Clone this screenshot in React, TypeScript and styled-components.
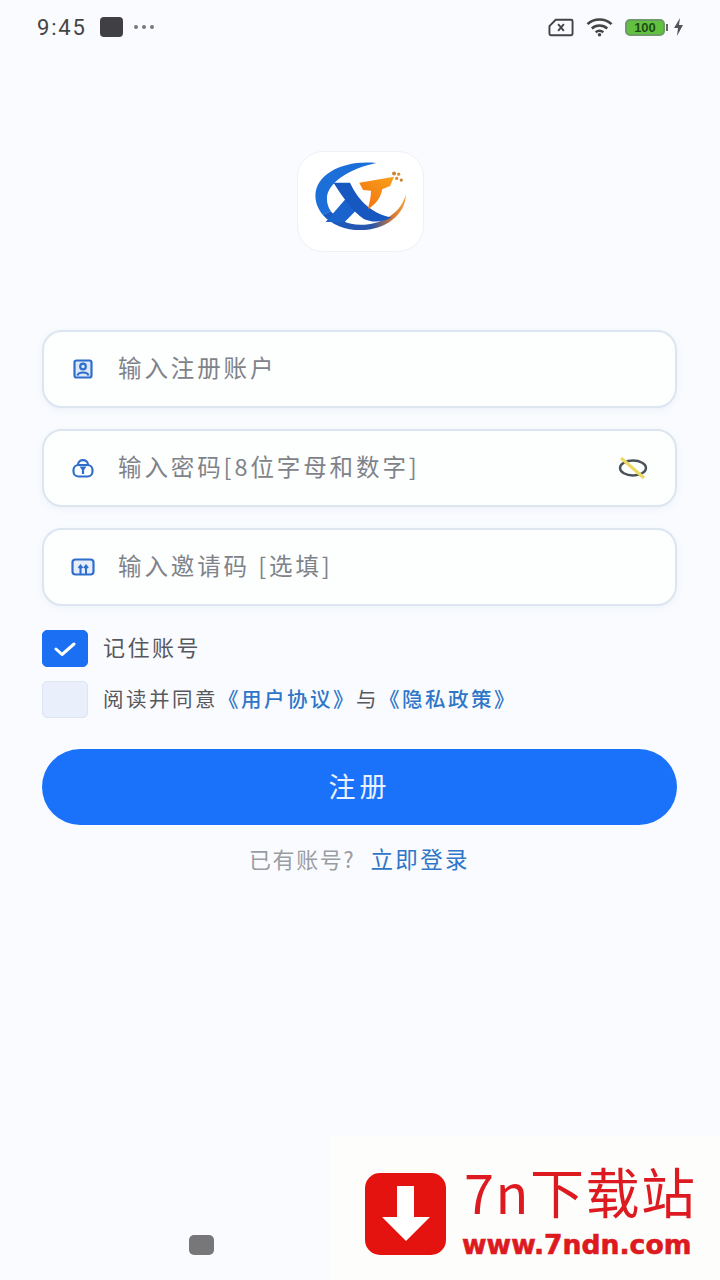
import React from 'react';
import styled, { createGlobalStyle } from 'styled-components';

const GlobalStyle = createGlobalStyle`
    html, body {
        margin: 0;
        padding: 0;
        background: #f9fbfe;
    }
    * {
        box-sizing: border-box;
    }
`;

const cjk = `"Noto Sans CJK SC", "Noto Sans", sans-serif`;

const Page = styled.div`
    position: relative;
    width: 720px;
    height: 1280px;
    overflow: hidden;
    display: flex;
    flex-direction: column;
    background: #f9fbfe;
    font-family: ${cjk};
`;

const StatusBar = styled.div`
    height: 54px;
    flex: none;
    display: flex;
    align-items: center;
    padding: 0 36px 0 37px;
    color: #444;
`;
const Time = styled.span`
    font-family: Roboto, sans-serif;
    font-size: 22px;
    letter-spacing: 1.8px;
    width: 63px;
    white-space: nowrap;
`;
const AppDot = styled.span`
    width: 23px;
    height: 20px;
    border-radius: 4px;
    background: #3f3f44;
`;
const Dots = styled.span`
    display: flex;
    gap: 4px;
    margin-left: 11px;
    i {
        width: 4px;
        height: 4px;
        border-radius: 50%;
        background: #777;
    }
`;
const StatusRight = styled.div`
    margin-left: auto;
    display: flex;
    align-items: center;
    gap: 12px;
`;
const Battery = styled.span`
    position: relative;
    width: 40px;
    height: 17px;
    margin-right: -4px;
    border: 2px solid #6f9a6a;
    border-radius: 5px;
    background: #62c23f;
    display: flex;
    align-items: center;
    justify-content: center;
    font-family: "Liberation Sans", sans-serif;
    font-size: 13px;
    font-weight: 700;
    line-height: 1;
    color: #1f4d19;
    &::after {
        content: '';
        position: absolute;
        right: -5px;
        top: 3px;
        width: 2px;
        height: 7px;
        background: #666;
    }
`;

const LogoBox = styled.div`
    width: 127px;
    height: 101px;
    margin: 97px auto 78px;
    border-radius: 26px;
    background: #fff;
    border: 1px solid #eef1f5;
    flex: none;
    svg {
        display: block;
    }
`;

const Form = styled.div`
    padding: 0 43px 0 42px;
    display: flex;
    flex-direction: column;
`;
const Field = styled.div`
    height: 78px;
    margin-bottom: 21px;
    padding: 0 26px 0 27px;
    display: flex;
    align-items: center;
    border: 2px solid #dce5f0;
    border-radius: 20px;
    background: #fdfefe;
    box-shadow: 0 2px 6px rgb(190 205 225 / 18%);
`;
const IconSlot = styled.span`
    width: 24px;
    height: 24px;
    margin-right: 23px;
    display: flex;
    align-items: center;
    justify-content: center;
    flex: none;
`;
const Placeholder = styled.span`
    flex: 1;
    padding-bottom: 4px;
    font-size: 23.5px;
    letter-spacing: 2.9px;
    color: #7f8389;
    white-space: nowrap;
`;

const CheckRow = styled.div<{ $gap: number; $first?: boolean }>`
    display: flex;
    align-items: center;
    height: 37px;
    margin-top: ${({ $first }) => ($first ? 3 : 0)}px;
    margin-bottom: ${({ $gap }) => $gap}px;
`;
const Box = styled.span<{ $checked?: boolean }>`
    width: 46px;
    height: 37px;
    border-radius: 5px;
    margin-right: 15px;
    display: flex;
    align-items: center;
    justify-content: center;
    background: ${({ $checked }) => ($checked ? '#1a6ff2' : '#e9effb')};
    border: 1px solid ${({ $checked }) => ($checked ? '#1a6ff2' : '#dde5f2')};
`;
const Label = styled.span`
    padding-bottom: 6px;
    font-size: 22px;
    letter-spacing: 2.5px;
    color: #56585d;
    white-space: nowrap;
`;
const AgreeText = styled.span`
    padding-bottom: 4px;
    font-size: 20.5px;
    letter-spacing: 2.5px;
    color: #56585d;
    white-space: nowrap;
`;
const TextLink = styled.span`
    color: #2f76c9;
    font-weight: 500;
`;

const SubmitButton = styled.button`
    width: 635px;
    height: 76px;
    margin-top: 12px;
    padding: 0 0 4px;
    border: none;
    border-radius: 38px;
    background: #1a72fb;
    color: #eaf2ff;
    font-family: ${cjk};
    font-size: 27px;
    letter-spacing: 4px;
`;
const Footer = styled.div`
    margin-top: 17px;
    text-align: center;
    font-size: 22px;
    letter-spacing: 1.6px;
    line-height: 32px;
    color: #9a9da3;
`;
const LoginLink = styled.span`
    color: #2f76c9;
    font-size: 22.5px;
    letter-spacing: 2.4px;
    margin-left: 15px;
`;

const NavButton = styled.span`
    position: absolute;
    left: 189px;
    top: 1235px;
    width: 25px;
    height: 20px;
    border-radius: 5px;
    background: #77777a;
`;

const Watermark = styled.div`
    position: absolute;
    right: 0;
    bottom: 0;
    width: 390px;
    height: 144px;
    background: #fdfdfc;
    display: flex;
    padding: 37px 0 0 35px;
`;
const BadgeIcon = styled.span`
    width: 81px;
    height: 82px;
    border-radius: 15px;
    background: #e5130f;
    display: flex;
    align-items: center;
    justify-content: center;
    flex: none;
`;
const WatermarkText = styled.div`
    margin-left: 18px;
    margin-top: -15px;
    color: #dc1a20;
    display: flex;
    flex-direction: column;
`;
const WatermarkTitle = styled.span`
    font-family: "Noto Sans CJK SC", sans-serif;
    font-size: 54px;
    line-height: 66px;
    letter-spacing: 1.5px;
    white-space: nowrap;
`;
const WatermarkUrl = styled.span`
    margin-top: 6px;
    margin-left: -2px;
    font-family: "DejaVu Sans", sans-serif;
    font-size: 26.6px;
    font-weight: 700;
    line-height: 30px;
    -webkit-text-stroke: 0.6px #dc1a20;
    white-space: nowrap;
`;

const Logo = () => (
    <svg width="125" height="99" viewBox="50 35 380 300">
        <defs>
            <linearGradient id="ring" x1="0" y1="0" x2="1" y2="0">
                <stop offset="0" stopColor="#1a5cc4" />
                <stop offset="0.6" stopColor="#2a55a8" />
                <stop offset="0.85" stopColor="#d9782e" />
                <stop offset="1" stopColor="#f0a23c" />
            </linearGradient>
            <linearGradient id="tee" x1="0" y1="1" x2="1" y2="0">
                <stop offset="0" stopColor="#f4700f" />
                <stop offset="1" stopColor="#f7a11c" />
            </linearGradient>
        </defs>
        <path
            d="M288 68C190 58 103 100 103 168C103 190 112 208 125 225L150 215C142 203 138 190 138 178C136 130 205 85 288 68Z"
            fill="#1c6fd8"
        />
        <path
            d="M125 225C150 255 195 272 240 272C315 272 378 225 378 162C366 215 310 256 240 256C200 256 170 240 150 215Z"
            fill="url(#ring)"
        />
        <path d="M205 165L238 200L192 247H134Z" fill="#1a62cc" />
        <path
            d="M158 128H208C228 170 262 218 334 234C305 250 270 248 250 238C215 215 185 170 158 128Z"
            fill="#1757c0"
        />
        <path
            d="M236 128L342 110L330 138L306 148C302 172 288 194 262 208C268 188 272 168 272 152L248 150Z"
            fill="url(#tee)"
        />
        <circle cx="342" cy="100" r="6" fill="#c9822f" />
        <circle cx="356" cy="102" r="5" fill="#d68f37" />
        <circle cx="350" cy="115" r="5" fill="#d68f37" />
        <circle cx="364" cy="120" r="5" fill="#c9822f" />
    </svg>
);

const UserIcon = () => (
    <svg width="20" height="20" viewBox="0 0 20 20" fill="#dce8f8" stroke="#2f6fcb" strokeWidth="2.2">
        <rect x="1.5" y="1.5" width="17" height="17" rx="2" />
        <circle cx="10" cy="7.5" r="2.8" fill="none" />
        <path d="M4.5 16.5C5.5 12.5 14.5 12.5 15.5 16.5" fill="none" />
    </svg>
);

const LockIcon = () => (
    <svg width="22" height="20" viewBox="0 0 22 20" fill="none" stroke="#2f6fcb" strokeWidth="2.2">
        <rect x="1.5" y="7" width="19" height="11.5" rx="5" />
        <path d="M6 7C6 0.5 16 0.5 16 7" />
        <path d="M7.5 8.5L14.5 8.5L11 13.5Z" fill="#2f6fcb" stroke="none" />
        <path d="M11 12V16" />
    </svg>
);

const CodeIcon = () => (
    <svg width="24" height="18" viewBox="0 0 24 18" fill="#e4edf9" stroke="#2f6fcb" strokeWidth="2.2">
        <rect x="1.5" y="1.5" width="21" height="15" rx="3" />
        <path d="M9.5 16V8M7.5 10L9.5 7.5L11.5 10M15 16V8M13 10L15 7.5L17 10" fill="none" strokeWidth="2" />
    </svg>
);

const EyeIcon = () => (
    <svg width="32" height="24" viewBox="0 0 32 24" fill="none">
        <ellipse cx="16" cy="12" rx="13" ry="7.5" stroke="#4b5258" strokeWidth="2.4" />
        <path d="M4 2L27 22" stroke="#ecd964" strokeWidth="3.2" />
    </svg>
);

const Check = () => (
    <svg width="22" height="16" viewBox="0 0 22 16" fill="none" stroke="#fff" strokeWidth="3" strokeLinecap="round" strokeLinejoin="round">
        <path d="M2 8L8 13.5L20 3" />
    </svg>
);

const SimIcon = () => (
    <svg width="26" height="19" viewBox="0 0 27 19" fill="none" stroke="#444" strokeWidth="2">
        <path d="M8 1.5H24C25 1.5 25.5 2 25.5 3V16C25.5 17 25 17.5 24 17.5H3C2 17.5 1.5 17 1.5 16V8Z" />
        <path d="M10.5 6L16.5 13M16.5 6L10.5 13" />
    </svg>
);

const WifiIcon = () => (
    <svg width="27" height="20" viewBox="0 0 28 20" fill="none" stroke="#444" strokeWidth="2.6">
        <path d="M1.5 7C8.5 0.5 19.5 0.5 26.5 7" />
        <path d="M6 11.5C10.5 7.5 17.5 7.5 22 11.5" />
        <path d="M10 15.5C12.5 13.5 15.5 13.5 18 15.5" />
        <circle cx="14" cy="18" r="1.8" fill="#444" stroke="none" />
    </svg>
);

const BoltIcon = () => (
    <svg width="11" height="18" viewBox="0 0 11 18">
        <path d="M7 0L1 10H5L4 18L10 7H6Z" fill="#555" />
    </svg>
);

const DownArrow = () => (
    <svg width="48" height="56" viewBox="0 0 48 56">
        <path d="M15 0H32V31H48L24 55L0 31H15Z" fill="#fff" />
    </svg>
);

const App = () => {
    return (
        <Page>
            <GlobalStyle />
            <StatusBar>
                <Time>9:45</Time>
                <AppDot />
                <Dots>
                    <i />
                    <i />
                    <i />
                </Dots>
                <StatusRight>
                    <SimIcon />
                    <WifiIcon />
                    <Battery>100</Battery>
                    <BoltIcon />
                </StatusRight>
            </StatusBar>

            <LogoBox>
                <Logo />
            </LogoBox>

            <Form>
                <Field>
                    <IconSlot>
                        <UserIcon />
                    </IconSlot>
                    <Placeholder>输入注册账户</Placeholder>
                </Field>
                <Field>
                    <IconSlot>
                        <LockIcon />
                    </IconSlot>
                    <Placeholder>输入密码[8位字母和数字]</Placeholder>
                    <EyeIcon />
                </Field>
                <Field>
                    <IconSlot>
                        <CodeIcon />
                    </IconSlot>
                    <Placeholder>输入邀请码 [选填]</Placeholder>
                </Field>
                <CheckRow $gap={14} $first>
                    <Box $checked>
                        <Check />
                    </Box>
                    <Label>记住账号</Label>
                </CheckRow>
                <CheckRow $gap={19}>
                    <Box />
                    <AgreeText>
                        阅读并同意<TextLink>《用户协议》</TextLink>与<TextLink>《隐私政策》</TextLink>
                    </AgreeText>
                </CheckRow>
                <SubmitButton>注册</SubmitButton>
                <Footer>
                    已有账号?<LoginLink>立即登录</LoginLink>
                </Footer>
            </Form>

            <NavButton />
            <Watermark>
                <BadgeIcon>
                    <DownArrow />
                </BadgeIcon>
                <WatermarkText>
                    <WatermarkTitle>7n下载站</WatermarkTitle>
                    <WatermarkUrl>www.7ndn.com</WatermarkUrl>
                </WatermarkText>
            </Watermark>
        </Page>
    );
};

export default App;
